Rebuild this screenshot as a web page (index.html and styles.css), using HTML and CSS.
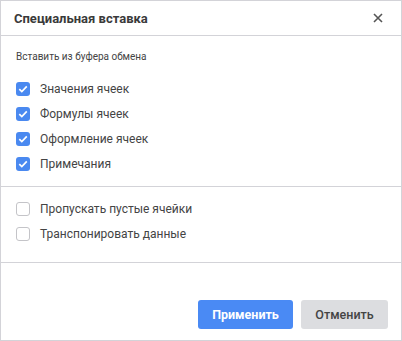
FILE: index.html
```html
<!DOCTYPE html>
<html lang="ru">
<head>
<meta charset="utf-8">
<link rel="stylesheet" href="styles.css">
</head>
<body>
<div class="dialog">
  <div class="header">
    <span class="title">Специальная вставка</span>
    <svg class="close" width="10" height="10" viewBox="0 0 10 10"><path d="M1 1L9 9M9 1L1 9" stroke="#555" stroke-width="1.6" fill="none"/></svg>
  </div>
  <div class="section first">
    <div class="caption">Вставить из буфера обмена</div>
    <div class="row"><span class="box on"><svg width="14" height="14" viewBox="0 0 14 14"><path d="M3.3 7.2L5.8 9.6L10.8 4.4" stroke="#fff" stroke-width="1.7" fill="none"/></svg></span><span class="label">Значения ячеек</span></div>
    <div class="row"><span class="box on"><svg width="14" height="14" viewBox="0 0 14 14"><path d="M3.3 7.2L5.8 9.6L10.8 4.4" stroke="#fff" stroke-width="1.7" fill="none"/></svg></span><span class="label">Формулы ячеек</span></div>
    <div class="row"><span class="box on"><svg width="14" height="14" viewBox="0 0 14 14"><path d="M3.3 7.2L5.8 9.6L10.8 4.4" stroke="#fff" stroke-width="1.7" fill="none"/></svg></span><span class="label">Оформление ячеек</span></div>
    <div class="row"><span class="box on"><svg width="14" height="14" viewBox="0 0 14 14"><path d="M3.3 7.2L5.8 9.6L10.8 4.4" stroke="#fff" stroke-width="1.7" fill="none"/></svg></span><span class="label">Примечания</span></div>
  </div>
  <div class="section second">
    <div class="row"><span class="box"></span><span class="label">Пропускать пустые ячейки</span></div>
    <div class="row"><span class="box"></span><span class="label">Транспонировать данные</span></div>
  </div>
  <div class="footer">
    <button class="btn primary">Применить</button>
    <button class="btn secondary">Отменить</button>
  </div>
</div>
</body>
</html>
```
FILE: styles.css
```css
html, body {
  margin: 0;
  padding: 0;
  background: #fff;
}
body {
  font-family: Roboto, "Liberation Sans", sans-serif;
}
.dialog {
  box-sizing: border-box;
  width: 402px;
  height: 341px;
  border: 1px solid #d3d3d8;
  display: flex;
  flex-direction: column;
  background: #fff;
}
.header {
  height: 34px;
  border-bottom: 1px solid #d3d3d8;
  display: flex;
  align-items: center;
  justify-content: space-between;
  padding: 0 18px 0 13px;
}
.title {
  font-size: 13px;
  font-weight: 700;
  color: #3a3a3a;
}
.close {
  display: block;
}
.section {
  border-bottom: 1px solid #d3d3d8;
  padding-left: 15px;
}
.section.first {
  padding-top: 15px;
  padding-bottom: 10px;
}
.section.second {
  padding-top: 9px;
  padding-bottom: 16px;
}
.caption {
  font-size: 10px;
  line-height: 12px;
  color: #444;
  margin-bottom: 13px;
}
.row {
  height: 25px;
  display: flex;
  align-items: center;
}
.box {
  box-sizing: border-box;
  width: 14px;
  height: 14px;
  border-radius: 3px;
  border: 1.5px solid #c4c4c8;
  background: #fff;
  margin-right: 10px;
  display: flex;
  align-items: center;
  justify-content: center;
}
.box.on {
  background: #4a89f0;
  border: none;
}
.box svg {
  display: block;
}
.label {
  font-size: 12px;
  color: #444;
}
.footer {
  flex: 1;
  display: flex;
  justify-content: flex-end;
  align-items: flex-end;
  gap: 8px;
  padding: 0 13px 11px 0;
}
.btn {
  height: 29px;
  border: none;
  border-radius: 3px;
  font-family: Roboto, "Liberation Sans", sans-serif;
  font-size: 12.5px;
  font-weight: 700;
  cursor: pointer;
}
.primary {
  width: 95px;
  background: #4a8af4;
  color: #fff;
}
.secondary {
  width: 87px;
  background: #dcdde0;
  color: #444;
  font-weight: 500;
}
```
